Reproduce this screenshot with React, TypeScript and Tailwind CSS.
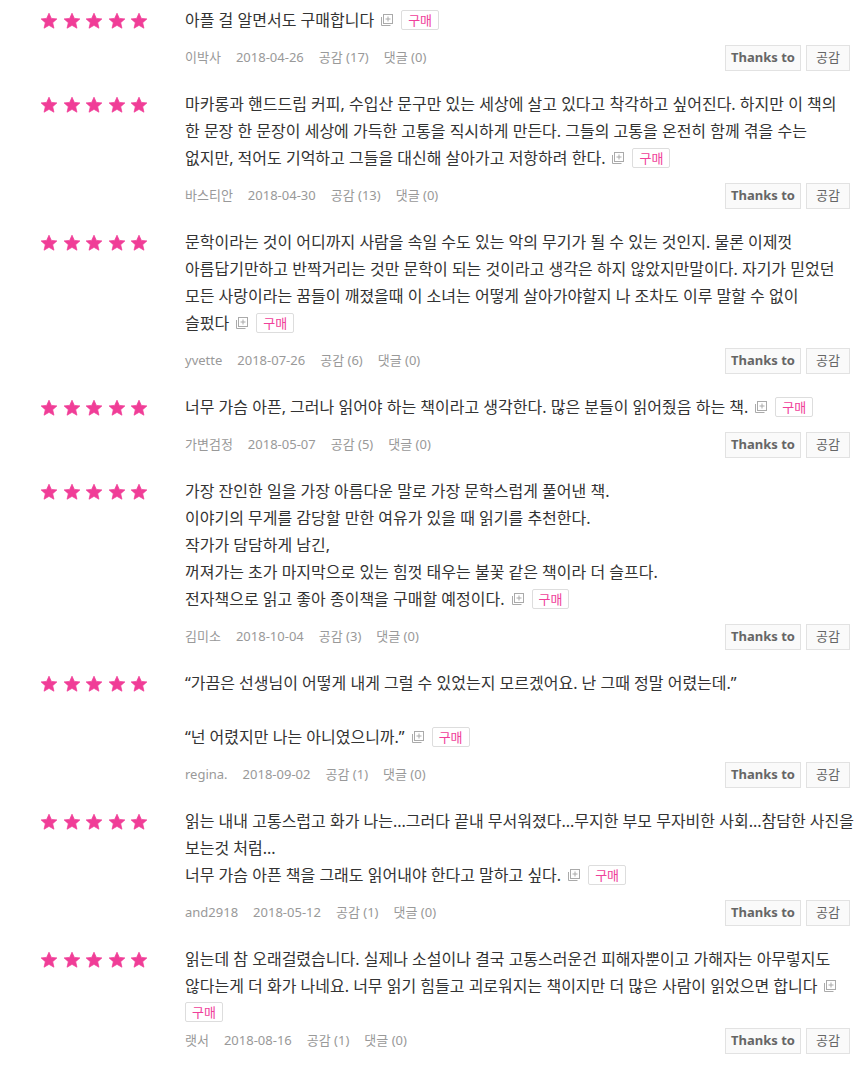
import React from 'react';

type Review = {
  text: string;
  author: string;
  date: string;
  likes: number;
  comments: number;
  badgeOwnLine?: boolean;
};

const reviews: Review[] = [
  { text: '아플 걸 알면서도 구매합니다', author: '이박사', date: '2018-04-26', likes: 17, comments: 0 },
  {
    text: '마카롱과 핸드드립 커피, 수입산 문구만 있는 세상에 살고 있다고 착각하고 싶어진다. 하지만 이 책의\n한 문장 한 문장이 세상에 가득한 고통을 직시하게 만든다. 그들의 고통을 온전히 함께 겪을 수는\n없지만, 적어도 기억하고 그들을 대신해 살아가고 저항하려 한다.',
    author: '바스티안',
    date: '2018-04-30',
    likes: 13,
    comments: 0,
  },
  {
    text: '문학이라는 것이 어디까지 사람을 속일 수도 있는 악의 무기가 될 수 있는 것인지. 물론 이제껏\n아름답기만하고 반짝거리는 것만 문학이 되는 것이라고 생각은 하지 않았지만말이다. 자기가 믿었던\n모든 사랑이라는 꿈들이 깨졌을때 이 소녀는 어떻게 살아가야할지 나 조차도 이루 말할 수 없이\n슬펐다',
    author: 'yvette',
    date: '2018-07-26',
    likes: 6,
    comments: 0,
  },
  {
    text: '너무 가슴 아픈, 그러나 읽어야 하는 책이라고 생각한다. 많은 분들이 읽어줬음 하는 책.',
    author: '가변검정',
    date: '2018-05-07',
    likes: 5,
    comments: 0,
  },
  {
    text: '가장 잔인한 일을 가장 아름다운 말로 가장 문학스럽게 풀어낸 책.\n이야기의 무게를 감당할 만한 여유가 있을 때 읽기를 추천한다.\n작가가 담담하게 남긴,\n꺼져가는 초가 마지막으로 있는 힘껏 태우는 불꽃 같은 책이라 더 슬프다.\n전자책으로 읽고 좋아 종이책을 구매할 예정이다.',
    author: '김미소',
    date: '2018-10-04',
    likes: 3,
    comments: 0,
  },
  {
    text: '“가끔은 선생님이 어떻게 내게 그럴 수 있었는지 모르겠어요. 난 그때 정말 어렸는데.”\n\n“넌 어렸지만 나는 아니였으니까.”',
    author: 'regina.',
    date: '2018-09-02',
    likes: 1,
    comments: 0,
  },
  {
    text: '읽는 내내 고통스럽고 화가 나는...그러다 끝내 무서워졌다...무지한 부모 무자비한 사회...참담한 사진을\n보는것 처럼...\n너무 가슴 아픈 책을 그래도 읽어내야 한다고 말하고 싶다.',
    author: 'and2918',
    date: '2018-05-12',
    likes: 1,
    comments: 0,
  },
  {
    text: '읽는데 참 오래걸렸습니다. 실제나 소설이나 결국 고통스러운건 피해자뿐이고 가해자는 아무렇지도\n않다는게 더 화가 나네요. 너무 읽기 힘들고 괴로워지는 책이지만 더 많은 사람이 읽었으면 합니다',
    author: '랫서',
    date: '2018-08-16',
    likes: 1,
    comments: 0,
    badgeOwnLine: true,
  },
];

const font = { fontFamily: '"Noto Sans", "Noto Sans CJK KR", sans-serif' };

function Star() {
  return (
    <svg width="18" height="18" viewBox="0 0 24 24" className="shrink-0">
      <path
        d="M12 1.6l3.1 6.9 7.4.7-5.6 5 1.7 7.4L12 17.8l-6.6 3.8 1.7-7.4-5.6-5 7.4-.7z"
        fill="#f03d97"
        stroke="#f03d97"
        strokeWidth="1"
        strokeLinejoin="round"
      />
    </svg>
  );
}

// small "expand" icon shown after each review
function ExpandIcon() {
  return (
    <svg width="13" height="13" viewBox="0 0 13 13" className="ml-[6px] inline-block align-[-1px]">
      <rect x="3.5" y="0.5" width="9" height="9" fill="none" stroke="#aaa" />
      <path d="M8 2.5v5M5.5 5h5" stroke="#aaa" />
      <path d="M1.5 3v8.5h9" fill="none" stroke="#aaa" />
    </svg>
  );
}

function BuyBadge({ block }: { block?: boolean }) {
  return (
    <span
      className={
        block
          ? 'mt-[2px] block h-[20px] w-fit rounded-[2px] border border-[#ddd] px-[6px] text-[13px] leading-[18px] text-[#f0409a]'
          : 'ml-[8px] inline-block h-[20px] rounded-[2px] border border-[#ddd] px-[6px] align-[1px] text-[13px] leading-[18px] text-[#f0409a]'
      }
    >
      구매
    </span>
  );
}

function ReviewItem({ review }: { review: Review }) {
  return (
    <div className="flex pt-[7px] pb-[13px]">
      <div className="flex h-[27px] w-[185px] shrink-0 items-center gap-[4.6px] pl-[40px]">
        {[0, 1, 2, 3, 4].map((i) => (
          <Star key={i} />
        ))}
      </div>
      <div className="w-[665px]">
        <p className="whitespace-pre text-[16px] leading-[27px] text-[#333]">
          {review.text}
          <ExpandIcon />
          {!review.badgeOwnLine && <BuyBadge />}
        </p>
        {review.badgeOwnLine && <BuyBadge block />}
        <div
          className={
            (review.badgeOwnLine ? 'mt-[6px]' : 'mt-[11px]') +
            ' flex h-[26px] items-center justify-between'
          }
        >
          <div className="flex gap-[15px] text-[13px] text-[#999]">
            <span>{review.author}</span>
            <span>{review.date}</span>
            <span>공감 ({review.likes})</span>
            <span>댓글 ({review.comments})</span>
          </div>
          <div className="flex gap-[5px]">
            <button className="h-[26px] w-[76px] border border-[#e2e2e2] bg-[#fafafa] text-[13px] font-bold text-[#666]">
              Thanks to
            </button>
            <button className="h-[26px] w-[44px] border border-[#e2e2e2] bg-[#fafafa] text-[13px] text-[#666]">
              공감
            </button>
          </div>
        </div>
      </div>
    </div>
  );
}

export default function App() {
  return (
    <div className="min-h-screen bg-white" style={font}>
      {reviews.map((r, i) => (
        <ReviewItem key={i} review={r} />
      ))}
    </div>
  );
}
